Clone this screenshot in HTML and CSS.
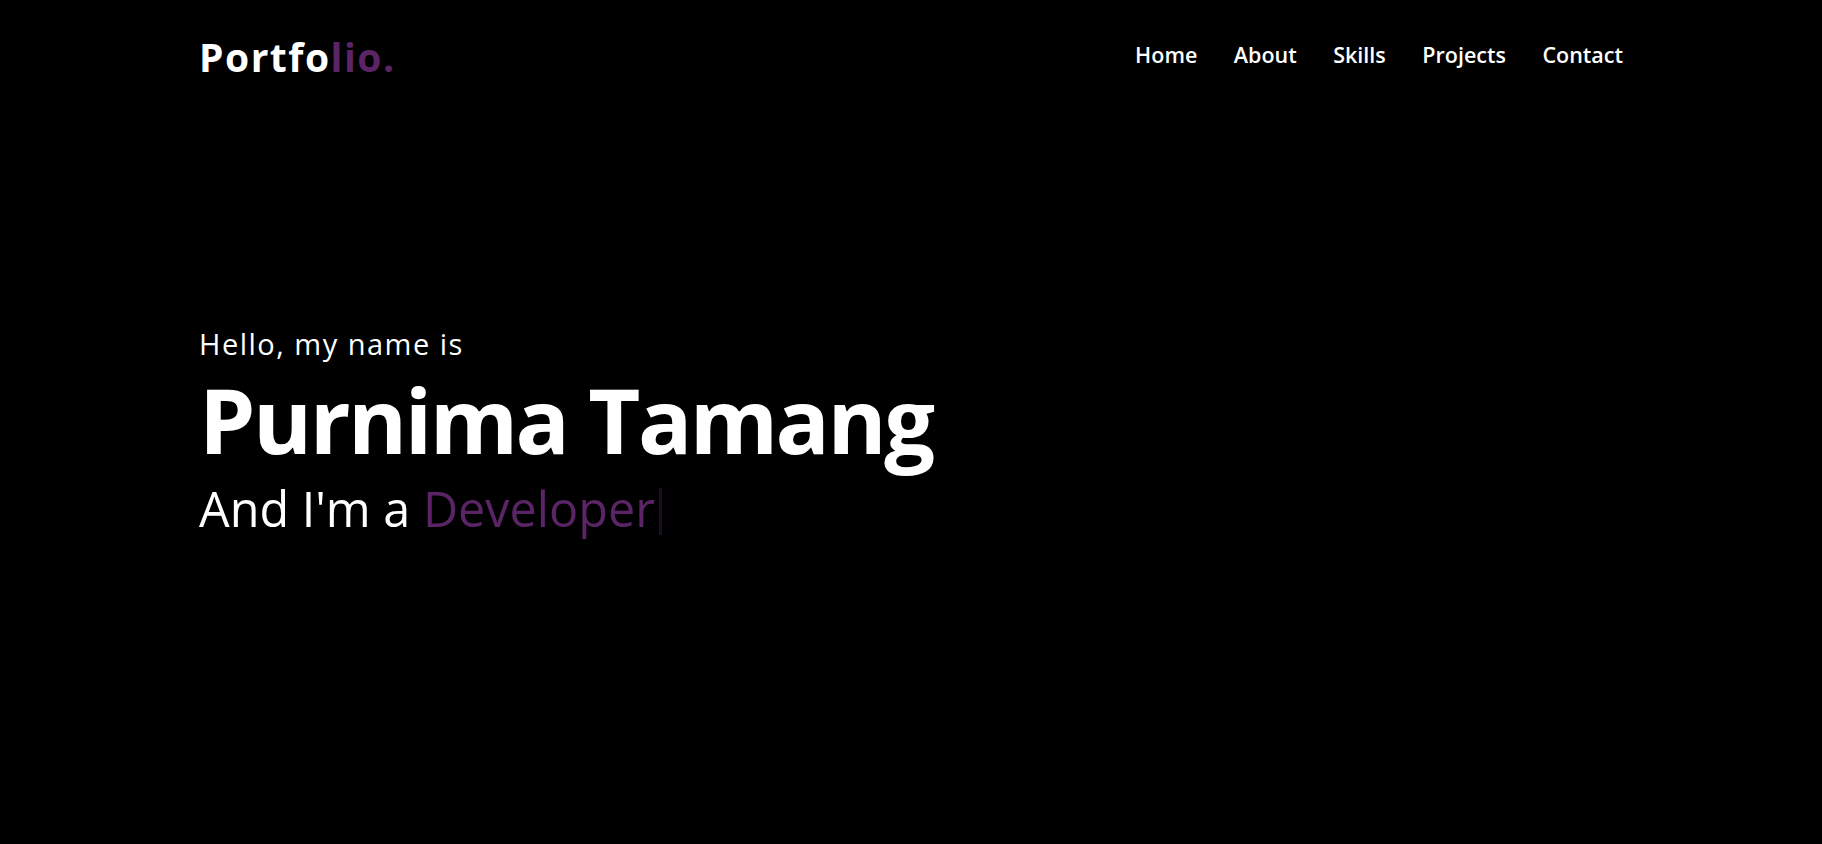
FILE: index.html
```html
<!DOCTYPE html>
<html lang="en">
<head>
<meta charset="utf-8">
<title>Portfolio</title>
<link rel="stylesheet" href="styles.css">
</head>
<body>
<header class="navbar">
  <div class="container nav-inner">
    <a class="logo" href="#"><span class="logo-main">Portfo</span><span class="logo-accent">lio.</span></a>
    <nav class="menu">
      <a href="#">Home</a>
      <a href="#">About</a>
      <a href="#">Skills</a>
      <a href="#">Projects</a>
      <a href="#">Contact</a>
    </nav>
  </div>
</header>
<section class="home">
  <div class="container home-content">
    <div class="text-1">Hello, my name is</div>
    <div class="text-2">Purnima Tamang</div>
    <div class="text-3">And I'm a <span class="typing">Developer</span><span class="cursor"></span></div>
  </div>
</section>
</body>
</html>
```
FILE: styles.css
```css
* { margin: 0; padding: 0; box-sizing: border-box; }
html, body { background: #000; }
body {
  font-family: "Open Sans", "Noto Sans", sans-serif;
  color: #fff;
  min-height: 844px;
}
a { text-decoration: none; color: inherit; }
.container {
  width: 1424px;
  margin: 0 auto;
}
.nav-inner {
  height: 112px;
  display: flex;
  align-items: center;
  justify-content: space-between;
}
.logo {
  font-size: 39px;
  font-weight: 700;
  color: #fff;
  letter-spacing: 1.5px;
}
.logo-accent { color: #5a2466; }
.menu {
  display: flex;
  gap: 36.5px;
  margin-bottom: 3px;
}
.menu a {
  font-size: 21.5px;
  font-weight: 600;
  color: #fff;
}
.home-content {
  padding-top: 214px;
}
.text-1 {
  font-size: 29px;
  line-height: 36px;
  letter-spacing: 1.5px;
}
.text-2 {
  font-size: 90px;
  font-weight: 700;
  line-height: 115px;
  letter-spacing: -2.5px;
}
.text-3 {
  font-size: 48.5px;
  line-height: 63px;
}
.typing { color: #5a2466; }
.cursor {
  display: inline-block;
  width: 3px;
  height: 47px;
  background: #1c0d20;
  vertical-align: -8px;
  margin-left: 4px;
}
```
